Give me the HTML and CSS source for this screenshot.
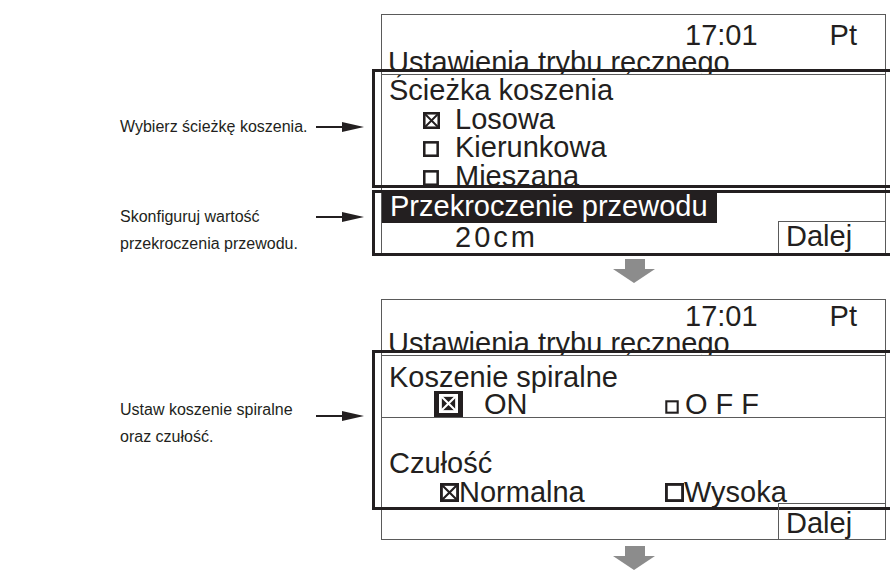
FILE: index.html
```html
<!DOCTYPE html>
<html lang="pl">
<head>
    <meta charset="UTF-8">
    <meta name="viewport" content="width=device-width, initial-scale=1.0">
    <title>Ustawienia trybu ręcznego</title>
    <link rel="stylesheet" href="styles.css">
</head>
<body>
    <main class="sheet">
        <div class="notes">
            <div class="note note-path">
                <p>Wybierz ścieżkę koszenia.</p>
                <svg class="pointer" viewBox="0 0 48 12"><path d="M0 6H30"/><polygon points="26,1 48,6 26,11"/></svg>
            </div>
            <div class="note note-wire">
                <p>Skonfiguruj wartość<br>przekroczenia przewodu.</p>
                <svg class="pointer" viewBox="0 0 48 12"><path d="M0 6H30"/><polygon points="26,1 48,6 26,11"/></svg>
            </div>
            <div class="note note-spiral">
                <p>Ustaw koszenie spiralne<br>oraz czułość.</p>
                <svg class="pointer" viewBox="0 0 48 12"><path d="M0 6H30"/><polygon points="26,1 48,6 26,11"/></svg>
            </div>
        </div>

        <div class="flow">
            <!-- ekran 1: ścieżka + przekroczenie przewodu -->
            <div class="screen">
                <div class="status"><span>17:01</span><span>Pt</span></div>
                <div class="title">Ustawienia trybu ręcznego</div>
                <div class="panel">
                    <div class="panel-body path-list">
                        <div class="line heading">Ścieżka koszenia</div>
                        <div class="line option">
                            <svg class="box" viewBox="0 0 16 16"><rect x="1.2" y="1.2" width="13.6" height="13.6"/><path d="M1.2 1.2L14.8 14.8M14.8 1.2L1.2 14.8"/></svg>Losowa
                        </div>
                        <div class="line option">
                            <svg class="box" viewBox="0 0 16 16"><rect x="1.2" y="2.2" width="12.6" height="12.6"/></svg>Kierunkowa
                        </div>
                        <div class="line option">
                            <svg class="box" viewBox="0 0 16 16"><rect x="1.2" y="2.2" width="12.6" height="12.6"/></svg>Mieszana
                        </div>
                    </div>
                </div>
                <div class="panel panel-wire">
                    <div class="panel-body">
                        <div class="selected">Przekroczenie przewodu</div>
                        <div class="value-row">
                            <span class="value">20cm</span>
                            <span class="next">Dalej</span>
                        </div>
                    </div>
                </div>
            </div>

            <svg class="down" viewBox="0 0 42 24"><polygon points="12,0 32,0 32,10 42,10 21,24 0,10 12,10"/></svg>

            <!-- ekran 2: koszenie spiralne + czułość -->
            <div class="screen screen-second">
                <div class="status"><span>17:01</span><span>Pt</span></div>
                <div class="title">Ustawienia trybu ręcznego</div>
                <div class="panel">
                    <div class="panel-body spiral">
                        <div class="heading">Koszenie spiralne</div>
                        <div class="choice-row toggle">
                            <span class="choice">
                                <span class="mark-on"><svg class="box" viewBox="0 0 16 16"><rect x="1.2" y="1.2" width="13.6" height="13.6"/><path d="M1.2 1.2L14.8 14.8M14.8 1.2L1.2 14.8"/></svg></span>ON
                            </span>
                            <span class="choice off">
                                <svg class="box small" viewBox="0 0 16 16"><rect x="1.5" y="1.5" width="13" height="13"/></svg>OFF
                            </span>
                        </div>
                        <div class="sensitivity">
                            <div class="heading">Czułość</div>
                            <div class="choice-row">
                                <span class="choice">
                                    <svg class="box wide" viewBox="0 0 16 16"><rect x="1.2" y="1.2" width="13.6" height="13.6"/><path d="M1.2 1.2L14.8 14.8M14.8 1.2L1.2 14.8"/></svg>Normalna
                                </span>
                                <span class="choice">
                                    <svg class="box wide" viewBox="0 0 16 16"><rect x="1.2" y="1.2" width="13.6" height="13.6"/></svg>Wysoka
                                </span>
                            </div>
                        </div>
                    </div>
                </div>
                <div class="screen-foot">
                    <span class="next">Dalej</span>
                </div>
            </div>

            <svg class="down down-last" viewBox="0 0 42 24"><polygon points="12,0 32,0 32,10 42,10 21,24 0,10 12,10"/></svg>
        </div>
    </main>
</body>
</html>
```

FILE: styles.css
```css
html, body {
    overflow: hidden;
}
body {
    margin: 0;
    background: #fff;
    color: #231f20;
    font-family: "Liberation Sans", Arial, sans-serif;
}
.sheet {
    display: flex;
    width: 890px;
}

/* opisy po lewej */
.notes {
    width: 381px;
    flex: none;
    box-sizing: border-box;
    padding: 0 17px 0 120px;
    display: flex;
    flex-direction: column;
}
.note {
    display: flex;
    align-items: flex-start;
}
.note p {
    margin: 0;
    font-size: 16px;
    line-height: 27px;
}
.pointer {
    width: 48px;
    height: 12px;
    margin-left: auto;
    flex: none;
}
.pointer path {
    stroke: #231f20;
    stroke-width: 2;
}
.pointer polygon {
    fill: #231f20;
}
.note-path {
    margin-top: 113px;
}
.note-path .pointer {
    margin-top: 8px;
}
.note-wire {
    margin-top: 63px;
}
.note-wire .pointer {
    margin-top: 8px;
}
.note-spiral {
    margin-top: 139px;
}
.note-spiral .pointer {
    margin-top: 14px;
}

/* ekrany */
.flow {
    width: 505px;
    flex: none;
}
.screen {
    margin-top: 14px;
    border: 1px solid #5a5a5a;
    padding-top: 7px;
    font-size: 29px;
    line-height: 27px;
}
.screen-second {
    margin-top: 0;
    padding-top: 3px;
}
.status {
    display: flex;
    justify-content: flex-end;
    gap: 72px;
    padding-right: 28px;
}
.title {
    padding-left: 6px;
    white-space: nowrap;
}
.panel {
    position: relative;
    margin: -7px -10px 0;
    border: 3px solid #231f20;
    padding: 2px 6px 0;
}
.panel-body {
    border: 1px solid #5a5a5a;
    border-bottom: none;
    background: #fff;
    overflow: hidden;
}
.path-list {
    height: 109px;
    padding-top: 1px;
    box-sizing: content-box;
}
.path-list .line {
    line-height: 28.5px;
    white-space: nowrap;
}
.heading {
    padding-left: 7px;
}
.option {
    padding-left: 41px;
}
.box {
    width: 17px;
    height: 17px;
    margin-right: 15px;
}
.box rect {
    fill: none;
    stroke: #231f20;
    stroke-width: 2.4;
}
.box path {
    stroke: #231f20;
    stroke-width: 1.8;
}

.panel-wire {
    margin: 2px -10px -2px;
    padding-top: 0;
}
.panel-wire .panel-body {
    border-top: none;
    height: 60px;
}
.selected {
    display: inline-block;
    background: #231f20;
    color: #fff;
    padding: 0 9px 4px 8px;
    line-height: 26px;
    white-space: nowrap;
}
.value-row {
    display: flex;
    height: 30px;
}
.value {
    padding-left: 73px;
    letter-spacing: 3px;
    line-height: 28px;
}
.next {
    margin-left: auto;
    margin-top: -2px;
    width: 107px;
    height: 32px;
    box-sizing: border-box;
    border-top: 1px solid #5a5a5a;
    border-left: 1px solid #5a5a5a;
    padding-left: 7px;
    line-height: 28px;
}

.down {
    display: block;
    width: 42px;
    height: 24px;
    margin: 4px auto 16px;
}
.down polygon {
    fill: #8c8c8c;
}
.down-last {
    margin-top: 6px;
}

/* ekran 2 */
.spiral {
    padding-top: 7.5px;
}
.choice-row {
    display: grid;
    grid-template-columns: 283px auto;
    line-height: 29px;
}
.choice-row.toggle {
    line-height: 26px;
    border-bottom: 1px solid #5a5a5a;
}
.choice {
    white-space: nowrap;
}
.toggle .choice:first-child {
    padding-left: 52px;
}
.mark-on {
    display: inline-flex;
    align-items: center;
    justify-content: center;
    width: 29px;
    height: 26px;
    vertical-align: top;
    margin-right: 21px;
    background: #231f20;
}
.mark-on .box {
    width: 19px;
    height: 19px;
    margin: 0;
}
.mark-on .box rect,
.mark-on .box path {
    stroke: #fff;
}
.box.small {
    width: 14px;
    height: 14px;
    margin-right: 6px;
}
.off {
    letter-spacing: 8px;
}
.sensitivity {
    padding-top: 31px;
}
.sensitivity .heading {
    line-height: 29px;
}
.sensitivity .choice:first-child {
    padding-left: 58px;
}
.box.wide {
    width: 19px;
    height: 19px;
    margin-right: 0;
}
.screen-foot {
    position: relative;
    margin-top: -7px;
    display: flex;
}
.screen-foot .next {
    margin-top: 0;
    height: 36px;
    padding-top: 3px;
    line-height: 32px;
}
```
